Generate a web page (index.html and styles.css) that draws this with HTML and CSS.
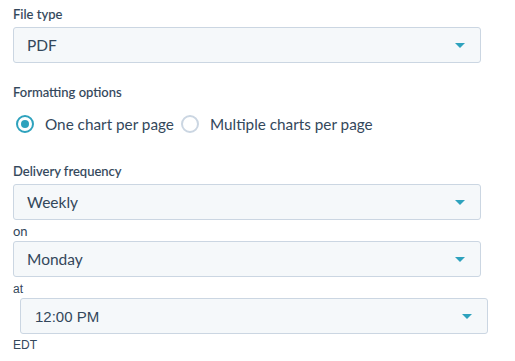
FILE: index.html
```html
<!DOCTYPE html>
<html lang="en">
<head>
    <meta charset="UTF-8">
    <meta name="viewport" content="width=device-width, initial-scale=1.0">
    <title>Export settings</title>
    <link rel="stylesheet" href="styles.css">
</head>
<body>
    <div class="form">
        <div class="field-label">File type</div>
        <div class="select">
            <span>PDF</span>
            <span class="caret"></span>
        </div>

        <div class="field-label section">Formatting options</div>
        <div class="radio-row">
            <label class="radio checked"><span class="circle"></span>One chart per page</label>
            <label class="radio"><span class="circle"></span>Multiple charts per page</label>
        </div>

        <div class="field-label section-lg">Delivery frequency</div>
        <div class="select">
            <span>Weekly</span>
            <span class="caret"></span>
        </div>

        <div class="small-label">on</div>
        <div class="select tight">
            <span>Monday</span>
            <span class="caret"></span>
        </div>

        <div class="small-label plain">at</div>
        <div class="select time">
            <span>12:00 PM</span>
            <span class="caret"></span>
        </div>
        <div class="small-label plain">EDT</div>
    </div>
</body>
</html>
```

FILE: styles.css
```css
body {
    margin: 0;
    padding: 5px 0 0 13px;
    background-color: #fff;
    color: #33475b;
    font-family: Lato, "Open Sans", sans-serif;
}
.form {
    width: 468px;
}
.field-label {
    font-size: 13px;
    line-height: 18px;
    font-weight: 500;
    -webkit-text-stroke: 0.1px #33475b;
    margin-bottom: 4px;
}
.section {
    margin-top: 20px;
    margin-bottom: 13px;
}
.section-lg {
    margin-top: 28px;
}
.select {
    height: 36px;
    box-sizing: border-box;
    background-color: #f5f8fa;
    border: 1px solid #cbd6e2;
    border-radius: 3px;
    display: flex;
    align-items: center;
    justify-content: space-between;
    padding: 0 15px 0 13px;
    font-size: 15.5px;
}
.select.time {
    width: 468px;
    margin-left: 7px;
    padding-left: 14px;
    font-size: 15px;
    font-family: "Liberation Sans", Arial, sans-serif;
}
.caret {
    width: 0;
    height: 0;
    border-left: 5.5px solid transparent;
    border-right: 5.5px solid transparent;
    border-top: 5px solid #2ea2bd;
}
.radio-row {
    display: flex;
    align-items: center;
    gap: 7px;
    height: 20px;
    font-size: 15.3px;
    padding-left: 3px;
}
.radio {
    display: flex;
    align-items: center;
    gap: 11px;
}
.circle {
    width: 18px;
    height: 18px;
    box-sizing: border-box;
    border: 2px solid #cbd6e2;
    border-radius: 50%;
    background-color: #fff;
    position: relative;
}
.radio.checked .circle {
    border-color: #2ea2bd;
}
.radio.checked .circle::after {
    content: "";
    position: absolute;
    left: 3px;
    top: 3px;
    width: 8px;
    height: 8px;
    border-radius: 50%;
    background-color: #2ea2bd;
}
.small-label {
    font-size: 13px;
    line-height: 16px;
    margin: 3px 0 2px;
}
.small-label.plain {
    font-family: "Liberation Sans", Arial, sans-serif;
    font-size: 12px;
    margin: 4px 0 1px;
}
.small-label.plain:last-child {
    margin-top: 3px;
}
```
